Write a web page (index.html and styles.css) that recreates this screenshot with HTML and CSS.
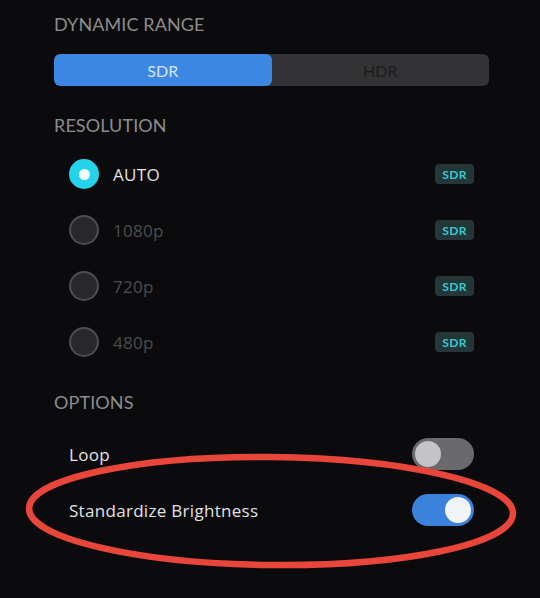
FILE: index.html
```html
<!DOCTYPE html>
<html>
<head>
<meta charset="utf-8">
<link rel="stylesheet" href="styles.css">
</head>
<body>
<div class="panel">
  <div class="section-title first">DYNAMIC RANGE</div>
  <div class="segmented">
    <div class="seg active">SDR</div>
    <div class="seg">HDR</div>
  </div>

  <div class="section-title res">RESOLUTION</div>
  <div class="list">
    <div class="row">
      <span class="radio on"><span class="dot"></span></span>
      <span class="label on">AUTO</span>
      <span class="badge">SDR</span>
    </div>
    <div class="row">
      <span class="radio"></span>
      <span class="label">1080p</span>
      <span class="badge">SDR</span>
    </div>
    <div class="row">
      <span class="radio"></span>
      <span class="label">720p</span>
      <span class="badge">SDR</span>
    </div>
    <div class="row">
      <span class="radio"></span>
      <span class="label">480p</span>
      <span class="badge">SDR</span>
    </div>
  </div>

  <div class="section-title opts">OPTIONS</div>
  <div class="list">
    <div class="row">
      <span class="label on">Loop</span>
      <span class="toggle"><span class="knob"></span></span>
    </div>
    <div class="row">
      <span class="label on">Standardize Brightness</span>
      <span class="toggle enabled"><span class="knob"></span></span>
    </div>
  </div>

  <svg class="annotation" width="540" height="598" viewBox="0 0 540 598">
    <ellipse cx="271" cy="511" rx="242" ry="54" fill="none" stroke="#e9463b" stroke-width="6.5" transform="rotate(0.6 271 511)"/>
  </svg>
</div>
</body>
</html>
```

FILE: styles.css
```css
html, body {
  margin: 0;
  padding: 0;
  background: #0b0b0d;
}
body {
  font-family: "Lato", "Noto Sans", sans-serif;
  width: 540px;
  height: 598px;
  overflow: hidden;
}
.panel {
  position: relative;
  padding: 0 0 0 54px;
  height: 598px;
  box-sizing: border-box;
}
.section-title {
  font-size: 18px;
  line-height: 24px;
  color: #8c8c8e;
  letter-spacing: 0.1px;
}
.section-title.first { padding-top: 12px; }
.section-title.res { margin-top: 27px; }
.section-title.opts { margin-top: 20px; }

.segmented {
  margin-top: 18px;
  display: flex;
  height: 32px;
  width: 435px;
  background: #333335;
  border-radius: 6px;
  overflow: hidden;
}
.seg {
  flex: 1;
  display: flex;
  align-items: center;
  justify-content: center;
  font-size: 16px;
  color: #1c1c1e;
}
.seg.active {
  background: #3b87e3;
  color: #d6e6fa;
  border-radius: 6px;
}

.list { margin-top: 9px; }
.opts + .list { margin-top: 12px; }
.row {
  height: 56px;
  display: flex;
  align-items: center;
  padding-left: 15px;
  width: 420px;
  box-sizing: border-box;
}
.radio {
  width: 26px;
  height: 26px;
  border-radius: 50%;
  border: 2px solid #4e4e50;
  background: #29292b;
  margin-right: 14px;
  display: flex;
  align-items: center;
  justify-content: center;
  flex: none;
}
.radio.on {
  background: #25d4ea;
  border-color: #25d4ea;
}
.radio .dot {
  width: 11px;
  height: 11px;
  border-radius: 50%;
  background: #f2fbff;
}
.label {
  font-family: "Open Sans", "Lato", sans-serif;
  font-size: 17px;
  letter-spacing: 0.3px;
  color: #4d4d4f;
  flex: 1;
}
.label.on { color: #e2e2e4; }
.badge {
  width: 39px;
  height: 20px;
  border-radius: 4px;
  background: #253639;
  color: #3ac8d4;
  font-size: 12px;
  font-weight: 700;
  letter-spacing: 0.3px;
  display: flex;
  align-items: center;
  justify-content: center;
  flex: none;
}
.toggle {
  width: 62px;
  height: 32px;
  border-radius: 16px;
  background: #6a6a6c;
  display: flex;
  align-items: center;
  padding: 0 3px;
  box-sizing: border-box;
  flex: none;
}
.toggle .knob {
  width: 26px;
  height: 26px;
  border-radius: 50%;
  background: #c4c4c6;
}
.toggle.enabled {
  background: #3a82dc;
  justify-content: flex-end;
}
.toggle.enabled .knob { background: #f1f3f6; }

.annotation {
  position: absolute;
  left: 0;
  top: 0;
  pointer-events: none;
}
```
